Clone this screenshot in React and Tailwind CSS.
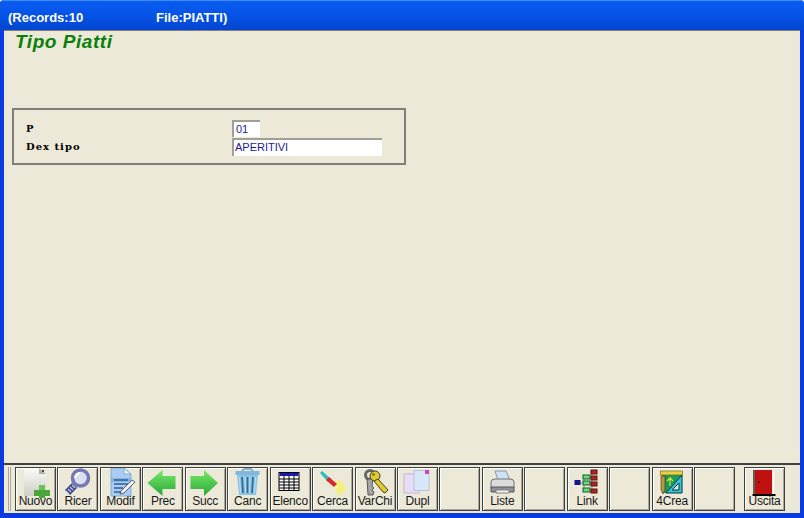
const sans = { fontFamily: '"Liberation Sans", Arial, sans-serif' };

const Icons = {
  nuovo: (
    <svg width="34" height="30" viewBox="0 0 34 30">
      <defs>
        <linearGradient id="n1" x1="0" y1="0" x2="0" y2="1">
          <stop offset="0" stopColor="#fafaf8" />
          <stop offset="1" stopColor="#cfcfc8" />
        </linearGradient>
      </defs>
      <path d="M4 0h15l7 6v22H4z" fill="url(#n1)" />
      <path d="M19 0l7 6h-7z" fill="#b0b0ac" />
      <path d="M22 2h2v2h-2z" fill="#444" />
      <path d="M19 17h6v5h5v6h-5v2h-6v-2h-5v-6h5z" fill="#4aa63c" />
      <path d="M19 17h6v5h-6z" fill="#6cc058" />
    </svg>
  ),
  ricer: (
    <svg width="34" height="30" viewBox="0 0 34 30">
      <path d="M3 22l7-7 5 5-7 7z" fill="#3c4684" />
      <path d="M4 23l3 3M6 21l3 3M8 19l3 3M10 17l3 3" stroke="#c8cce8" strokeWidth="1.2" />
      <circle cx="18.500" cy="10" r="8" fill="#dcdff2" stroke="#7779b2" strokeWidth="3.600" />
      <path d="M13 10a6 6 0 0 1 5-5" stroke="#fff" strokeWidth="2" fill="none" />
    </svg>
  ),
  modif: (
    <svg width="34" height="30" viewBox="0 0 34 30">
      <path d="M7 0h13l7 6v22H7z" fill="#a9cdf0" stroke="#86acd4" />
      <path d="M20 0l7 6h-7z" fill="#eef5fc" stroke="#86acd4" />
      <path d="M7 10h20v4H7z" fill="#6ea4d8" opacity="0.6" />
      <path d="M10 12h14M10 16h14M10 20h9M10 24h7" stroke="#2f5f98" strokeWidth="1.5" />
      <path d="M17 23l11-11 3 2-11 11-4 1z" fill="#f0f0f6" stroke="#3a3f5c" strokeWidth="0.8" />
    </svg>
  ),
  prec: (
    <svg width="34" height="30" viewBox="0 0 34 30">
      <defs>
        <linearGradient id="g1" x1="0" y1="0" x2="0" y2="1">
          <stop offset="0" stopColor="#78e868" />
          <stop offset="1" stopColor="#28a838" />
        </linearGradient>
      </defs>
      <path d="M0.500 15L15.500 2v6h13v13h-13v7z" fill="url(#g1)" />
    </svg>
  ),
  succ: (
    <svg width="34" height="30" viewBox="0 0 34 30">
      <defs>
        <linearGradient id="g2" x1="0" y1="0" x2="0" y2="1">
          <stop offset="0" stopColor="#78e868" />
          <stop offset="1" stopColor="#28a838" />
        </linearGradient>
      </defs>
      <path d="M29 15L15 2v6H1.500v13H15v7z" fill="url(#g2)" />
    </svg>
  ),
  canc: (
    <svg width="34" height="30" viewBox="0 0 34 30">
      <path d="M10 3l2-2h7l2 2" fill="none" stroke="#6aa0c4" strokeWidth="1.500" />
      <path d="M3.500 3h24v4h-24z" fill="#7fb8dc" />
      <path d="M5 7h21l-2 20H7z" fill="#8cc4e4" />
      <path d="M10 9l1 16M15.500 9v16M21 9l-1 16" stroke="#2f6c98" strokeWidth="1.800" />
      <path d="M7.500 9l1 16M13 9l.5 16M18 9l-.5 16M23.500 9l-1 16" stroke="#c4e4f4" strokeWidth="0.800" />
    </svg>
  ),
  elenco: (
    <svg width="34" height="30" viewBox="0 0 34 30">
      <rect x="5" y="4.500" width="20" height="18" fill="#fff" stroke="#000" />
      <rect x="5.500" y="5" width="19" height="3" fill="#1a1ab0" />
      <path d="M5 11h20M5 14h20M5 17h20M5 20h20M10 8v14M15 8v14M20 8v14" stroke="#000" strokeWidth="1" />
    </svg>
  ),
  cerca: (
    <svg width="34" height="30" viewBox="0 0 34 30">
      <path d="M15 15l8-3 7 9-8 7z" fill="#f4f07c" />
      <path d="M14 14l6 6" stroke="#f8f8c0" strokeWidth="2" />
      <path d="M5 3l9 8-3 3-8-9z" fill="#2cbcc0" />
      <path d="M12 9l8 7-3 3-8-7z" fill="#d82828" />
    </svg>
  ),
  varchi: (
    <svg width="34" height="30" viewBox="0 0 34 30">
      <circle cx="11" cy="7" r="4.500" fill="none" stroke="#666" strokeWidth="3" />
      <path d="M8 11l1 16h5l1-3-2-2 2-2-2-2 1-7z" fill="#a4a4a4" stroke="#404040" strokeWidth="0.800" />
      <circle cx="16" cy="8" r="5" fill="#e0cc28" stroke="#404040" />
      <circle cx="14.500" cy="6.500" r="1.200" fill="#606020" />
      <path d="M19 11l10 11-3 3-2-1-9-11z" fill="#e0cc28" stroke="#404040" />
    </svg>
  ),
  dupl: (
    <svg width="34" height="30" viewBox="0 0 34 30">
      <rect x="3" y="6" width="15" height="19" fill="#e8ddf4" stroke="#c4b6dc" />
      <rect x="13" y="2.500" width="15" height="20" fill="#d8e8f8" stroke="#b4c4e0" />
      <rect x="24" y="2" width="4" height="4" fill="#c848b8" />
    </svg>
  ),
  liste: (
    <svg width="34" height="30" viewBox="0 0 34 30">
      <path d="M9 3h11l4 9H12z" fill="#cfe2f4" stroke="#8898a8" />
      <path d="M5 14q0-3 4-3h15q4 0 4 3v6H5z" fill="#dcdcdc" stroke="#707070" />
      <path d="M5 19h23v5H5z" fill="#909090" stroke="#585858" />
      <path d="M10 22h13v3H10z" fill="#f4f4f4" stroke="#808080" />
    </svg>
  ),
  link: (
    <svg width="34" height="30" viewBox="0 0 34 30">
      <path d="M9 15h3M13 9v13M19 4h3M19 10h3M19 15h3M19 22h3M21 4v18" stroke="#a09880" fill="none" />
      <rect x="3.500" y="12" width="6" height="5" fill="#14148c" />
      <rect x="12" y="7" width="7" height="4" fill="#70d880" stroke="#0c5c28" />
      <rect x="12" y="13" width="7" height="4" fill="#70d880" stroke="#0c5c28" />
      <rect x="12" y="20" width="7" height="4" fill="#70d880" stroke="#0c5c28" />
      <rect x="20" y="2" width="6" height="4" fill="#a82828" stroke="#601010" />
      <rect x="20" y="8" width="6" height="4" fill="#a82828" stroke="#601010" />
      <rect x="20" y="14" width="6" height="4" fill="#a82828" stroke="#601010" />
      <rect x="20" y="21" width="6" height="4" fill="#a82828" stroke="#601010" />
    </svg>
  ),
  crea: (
    <svg width="34" height="30" viewBox="0 0 34 30">
      <rect x="6" y="4" width="20" height="21" fill="#189c58" />
      <rect x="4.500" y="3" width="22" height="4" fill="#e8d040" stroke="#6a5a10" strokeWidth="0.600" />
      <path d="M5 8h4v14l-2 4-2-4z" fill="#b89838" stroke="#403010" strokeWidth="0.600" />
      <path d="M26 7v18H10z" fill="#30c8d8" stroke="#083040" />
      <path d="M23 15v7h-7z" fill="#e8e8d8" stroke="#083040" />
      <path d="M14 18v-8l-3 3M14 10l3 3" stroke="#e0e040" strokeWidth="1.200" fill="none" />
    </svg>
  ),
  uscita: (
    <svg width="34" height="30" viewBox="0 0 34 30">
      <path d="M5 2v25" stroke="#000" strokeWidth="1.200" />
      <rect x="6" y="2" width="17" height="24" fill="#c01010" />
      <path d="M24.500 2v25" stroke="#fff" strokeWidth="1.400" strokeDasharray="6 1" />
      <rect x="9" y="13" width="2" height="2" fill="#500" />
      <path d="M3.500 27h23" stroke="#000" strokeWidth="2" />
    </svg>
  ),
};

const buttons = [
  { icon: "nuovo", label: "Nuovo" },
  { icon: "ricer", label: "Ricer" },
  { icon: "modif", label: "Modif" },
  { icon: "prec", label: "Prec" },
  { icon: "succ", label: "Succ" },
  { icon: "canc", label: "Canc" },
  { icon: "elenco", label: "Elenco" },
  { icon: "cerca", label: "Cerca" },
  { icon: "varchi", label: "VarChi" },
  { icon: "dupl", label: "Dupl" },
  {},
  { icon: "liste", label: "Liste" },
  {},
  { icon: "link", label: "Link" },
  {},
  { icon: "crea", label: "4Crea" },
  {},
];

function ToolButton({ icon, label }) {
  return (
    <div className="w-[41px] h-[44px] flex flex-col items-center border border-[#404040] bg-[#ece9d8] shadow-[inset_1px_1px_0_#ffffff,inset_-1px_-1px_0_#aca899]">
      <div className="h-[27px] pl-[2px] flex items-start justify-center">
        {icon && Icons[icon]}
      </div>
      {label && <span className="relative text-[12px] leading-[13px] tracking-[-0.2px] text-[#181818]">{label}</span>}
    </div>
  );
}

export default function App() {
  return (
    <div className="w-[804px] h-[518px] flex flex-col bg-[#0a3be0] overflow-hidden rounded-t-[4px]" style={sans}>
      <div className="h-[30px] shrink-0 flex items-center pl-[8px] pt-[4px] border-t border-[#3c8cff] bg-gradient-to-b from-[#0a5cf0] via-[#0553e6] to-[#0345d0] text-white font-bold text-[13px] leading-[14px]">
        <span className="w-[148px]">(Records:10</span>
        <span>File:PIATTI)</span>
      </div>
      <div className="h-px shrink-0 bg-[#808080] mx-[4px]" />
      <div className="flex-1 mx-[4px] mb-[5px] min-h-0 flex flex-col bg-[#ece9d8]">
        <div className="flex-1 flex flex-col min-h-0">
          <h1 className="ml-[11px] mt-[1px] text-[19px] leading-[19px] font-bold italic text-[#0a800a] tracking-[0.55px]">
            Tipo Piatti
          </h1>
          <div className="ml-[8px] mt-[57px] w-[394px] h-[57px] border-2 border-[#808078] pt-[10px] pl-[12px] font-['DejaVu_Serif',serif] font-bold text-[10px] tracking-[1px] text-black">
            <div className="flex items-start h-[18px]">
              <span className="w-[206px] leading-[18px]">P</span>
              <div className="w-[28px] h-[17px] bg-white border-t-2 border-l-2 border-[#a0a098] pl-[2px] text-[11px] leading-[14px] tracking-normal font-normal text-[#1a1a9c]" style={sans}>
                01
              </div>
            </div>
            <div className="flex items-start h-[18px]">
              <span className="w-[206px] leading-[18px]">Dex tipo</span>
              <div className="w-[150px] h-[18px] bg-white border-t-2 border-l-2 border-[#a0a098] pl-[1px] text-[11px] leading-[14px] tracking-normal font-normal text-[#1a1a9c]" style={sans}>
                APERITIVI
              </div>
            </div>
          </div>
        </div>
        <div className="h-[50px] shrink-0 border-t-2 border-[#404040] flex items-start pt-[2px] pl-[4px]">
          <div className="w-[3px] h-[44px] mr-[4px] border-x border-[#aca899]" />
          <div className="flex gap-[1.45px]">
            {buttons.map((b, i) => (
              <ToolButton key={i} {...b} />
            ))}
          </div>
          <div className="ml-[9px]">
            <ToolButton icon="uscita" label="Uscita" />
          </div>
        </div>
      </div>
    </div>
  );
}
